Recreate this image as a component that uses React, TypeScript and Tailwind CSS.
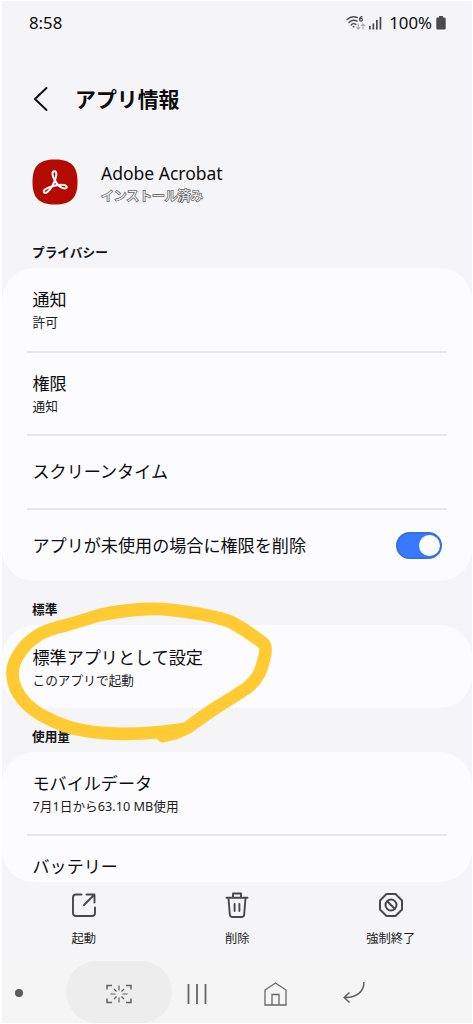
import type { ReactNode } from "react";

interface RowProps {
  title: string;
  sub?: string;
  className: string;
  children?: ReactNode;
}

function Row({ title, sub, className, children }: RowProps) {
  return (
    <div className={`mx-[25px] flex items-center justify-between pl-[5.5px] pr-[5px] ${className}`}>
      <div>
        <div className="text-[17.1px] leading-[24px] whitespace-nowrap">{title}</div>
        {sub && <div className="text-[12.7px] leading-[18px] mt-px mb-px whitespace-nowrap text-[#1c1c1e]">{sub}</div>}
      </div>
      {children}
    </div>
  );
}

function Divider() {
  return <div className="mx-[25px] h-[2px] shrink-0 bg-[#e7e7e9]" />;
}

function SectionTitle({ children, className }: { children: ReactNode; className: string }) {
  return (
    <h2 className={`pl-[30px] text-[12.7px] leading-[18px] font-bold text-[#141416] ${className}`}>
      {children}
    </h2>
  );
}

function StatusBar() {
  return (
    <div className="flex h-[44px] items-center justify-between pl-[27px] pr-[26px] text-[16.8px]">
      <span>8:58</span>
      <div className="flex items-center">
        {/* Wi-Fi 6 with traffic arrows */}
        <svg className="-ml-px" width="20" height="16" viewBox="0 0 20 16" fill="none" stroke="#4d4d4f" strokeWidth="1.4" strokeLinecap="round">
          <path d="M1 4.6C4 1.6 8 1.2 11.2 2.5" />
          <path d="M3 7.4C5.5 5 8.8 4.9 11 6.2" />
          <path d="M5.2 9.9C6.6 8.5 8.6 8.5 9.9 9.4" />
          <circle cx="7.5" cy="11.7" r=".9" fill="#4d4d4f" stroke="none" />
          <path d="M16 1.6C14.3 2 13.5 3.3 13.5 4.5" strokeWidth="1.2" />
          <circle cx="15" cy="4.7" r="1.4" strokeWidth="1.2" />
          <path d="M12.2 9V14M10.5 12.4L12.2 14.2L13.9 12.4M17 14V9M15.3 10.7L17 9L18.7 10.7" stroke="#aaaaad" strokeWidth="1.1" />
        </svg>
        <svg className="ml-[3px]" width="13" height="14" viewBox="0 0 13 14" fill="#4a4a4c">
          <rect x="0" y="10" width="1.7" height="3.5" />
          <rect x="3.5" y="7.5" width="1.7" height="6" />
          <rect x="7" y="4" width="1.7" height="9.5" />
          <rect x="10.6" y="1" width="1.7" height="12.5" />
        </svg>
        <span className="ml-[7px]">100%</span>
        <svg className="ml-[4px]" width="10" height="14" viewBox="0 0 10 14" fill="#4a4a4c">
          <path d="M3 0h4v1.5h1.5q1.2 0 1.2 1.2v9.6q0 1.2-1.2 1.2h-7Q.3 13.5.3 12.3V2.7Q.3 1.5 1.5 1.5H3z" />
        </svg>
      </div>
    </div>
  );
}

function AcrobatIcon() {
  return (
    <svg width="46" height="46" viewBox="0 0 46 46" fill="none">
      <path d="M23 .5C39 .5 45.5 7 45.5 23S39 45.5 23 45.5.5 39 .5 23 7 .5 23 .5z" fill="#b30b00" />
      <path
        d="M22 12.3C25.6 11.5 25 18 20.5 26.5C17 33 12.8 35.5 11.8 32.8C10.8 29.8 22 26 29 25.8C36 25.6 36.3 30 31.5 29.3C25 28.2 17.2 13.5 22 12.3z"
        stroke="#fff"
        strokeWidth="2"
      />
    </svg>
  );
}

function Toggle() {
  return (
    <div className="-mt-px flex h-[27px] w-[46px] items-center justify-end rounded-full border-2 border-[#366fe0] bg-[#387aff]">
      <div className="size-[21px] rounded-full bg-[#fcfcfe]" />
    </div>
  );
}

function BottomAction({ label, children }: { label: string; children: ReactNode }) {
  return (
    <div className="flex w-[153.5px] flex-col items-center">
      {children}
      <span className="mt-[12px] text-[12.3px] leading-[18px] text-[#1c1c1e]">{label}</span>
    </div>
  );
}

function ActionBar() {
  return (
    <div className="flex h-[79px] pl-[5px] pt-[10px]">
      <BottomAction label="起動">
        <svg width="26" height="26" viewBox="0 0 26 26" fill="none" stroke="#48484a" strokeWidth="1.9" strokeLinecap="round" strokeLinejoin="round">
          <path d="M10.5 2.5H5Q2 2.5 2 5.5V21Q2 24 5 24H21Q24 24 24 21V15.5M15.5 2.5H23.5V10.5M23 3L13 13" />
        </svg>
      </BottomAction>
      <BottomAction label="削除">
        <svg width="26" height="26" viewBox="0 0 26 26" fill="none" stroke="#48484a" strokeWidth="1.9" strokeLinecap="round" strokeLinejoin="round">
          <path d="M2.5 5.8H23.5M9 5.5V1.5H17V5.5M4.5 6L5.8 22.5Q6 25 8.5 25H17.5Q20 25 20.2 22.5L21.5 6M10.6 12V19M15.4 12V19" />
        </svg>
      </BottomAction>
      <BottomAction label="強制終了">
        <svg width="26" height="26" viewBox="0 0 26 26" fill="none" stroke="#48484a" strokeWidth="2" strokeLinejoin="round">
          <path d="M8.5 2H17.5L24 8.5V17.5L17.5 24H8.5L2 17.5V8.5Z" />
          <circle cx="13" cy="13" r="5.5" />
          <path d="M9.2 9.2L16.8 16.8" />
        </svg>
      </BottomAction>
    </div>
  );
}

function NavBar() {
  return (
    <div className="flex h-[62px] items-center bg-[#f5f5f5]">
      <div className="ml-[13px] mt-[2px] size-[8px] rounded-full bg-[#5c5c5c]" />
      <div className="ml-[43px] flex h-[62px] w-[106px] items-center justify-center rounded-full bg-[#ededed]">
        <svg className="mt-[3px]" width="26" height="20" viewBox="0 0 26 20" fill="none" stroke="#626262" strokeWidth="1.5">
          <path d="M1 5.5V1.5H6M20 1.5H25V5.5M1 14.5V18.5H6M20 18.5H25V14.5" />
          <path d="M13 1.5V6.5M13 13.5V18.5M4.5 10H9.5M16.5 10H21.5M8 5L10.5 7.5M18 5L15.5 7.5M8 15L10.5 12.5M18 15L15.5 12.5" strokeWidth="1.2" />
        </svg>
      </div>
      <svg className="ml-[15px] mt-[3px]" width="20" height="20" viewBox="0 0 20 20" fill="none" stroke="#666" strokeWidth="1.8">
        <path d="M1.5 0V20M10 0V20M18.5 0V20" />
      </svg>
      <svg className="ml-[57px] mt-[3px]" width="23" height="24" viewBox="0 0 23 24" fill="none" stroke="#686868" strokeWidth="1.3">
        <path d="M1 8L11.5 1L22 8V23H1ZM8 23V12.5H15V23" />
      </svg>
      <svg className="ml-[56px] mt-[2px]" width="22" height="22" viewBox="0 0 22 22" fill="none" stroke="#5f5f5f" strokeWidth="1.5">
        <path d="M21 0C21 10 13 16 1.5 15.5M6.5 10.5L1.2 15.5L6.5 20.5" />
      </svg>
    </div>
  );
}

export default function App() {
  return (
    <div className="relative flex h-[1024px] w-[473px] flex-col overflow-hidden border-y border-r border-l-2 border-white bg-[#f5f5f7] font-['Noto_Sans','Noto_Sans_CJK_JP',sans-serif] text-[#0c0c0e]">
      <StatusBar />

      {/* Page header */}
      <header className="mt-[37px] flex h-[36px] items-center">
        <svg className="-mt-[2px] ml-[31px]" width="16" height="26" viewBox="0 0 16 26" fill="none" stroke="#0c0c0e" strokeWidth="1.9" strokeLinecap="round" strokeLinejoin="round">
          <path d="M13.5 2L2 13L13.5 24" />
        </svg>
        <h1 className="ml-[26px] text-[20.9px] font-bold whitespace-nowrap">アプリ情報</h1>
      </header>

      {/* App name and install state */}
      <div className="mt-[41px] flex h-[48px] items-center">
        <div className="ml-[30px]">
          <AcrobatIcon />
        </div>
        <div className="ml-[23px] mt-px">
          <div className="text-[17.5px] leading-[24px]">Adobe Acrobat</div>
          <div className="text-[12.8px] leading-[18px] mt-px text-[#f5f5f7] [-webkit-text-stroke:1.6px_#666] [paint-order:stroke_fill]">
            インストール済み
          </div>
        </div>
      </div>

      <SectionTitle className="mt-[37px]">プライバシー</SectionTitle>
      <section className="mt-[7px] flex h-[313px] shrink-0 flex-col rounded-[32px] bg-[#fcfcfe]">
        <Row title="通知" sub="許可" className="h-[83px] pt-[1px]" />
        <Divider />
        <Row title="権限" sub="通知" className="h-[81px]" />
        <Divider />
        <Row title="スクリーンタイム" className="h-[72px]" />
        <Divider />
        <Row title="アプリが未使用の場合に権限を削除" className="h-[71px]">
          <Toggle />
        </Row>
      </section>

      <SectionTitle className="mt-[19px]">標準</SectionTitle>
      <section className="mt-[7px] h-[83px] shrink-0 rounded-[32px] bg-[#fcfcfe]">
        <Row title="標準アプリとして設定" sub="このアプリで起動" className="h-[83px] pt-[2px]" />
      </section>

      <SectionTitle className="mt-[19px]">使用量</SectionTitle>
      <section className="mt-[7px] h-[130px] shrink-0 overflow-hidden rounded-[32px] bg-[#fcfcfe]">
        <Row title="モバイルデータ" sub="7月1日から63.10 MB使用" className="h-[82px] pt-[2px]" />
        <Divider />
        <Row title="バッテリー" className="h-[62px]" />
      </section>

      <ActionBar />
      <NavBar />

      {/* Hand-drawn marker around the default app setting */}
      <svg className="pointer-events-none absolute -left-[2px] -top-px" width="473" height="1024" viewBox="0 0 473 1024" fill="none">
        <path
          d="M163 736Q176 734 187 728C197 721 206 714 217 707Q232 698 247 688C259 678 261 671 264 659Q267 648 264 644Q248 631 231 622C221 618 211 616 200 614C183 611 164 608 147 609Q123 610 100 615L67 625Q45 630 37 636C27 642 12 658 12.5 674C13 694 29 709 45 717Q64 727 81 730C113 736 145 735 184 729"
          stroke="#ffca32"
          strokeWidth="12.8"
          strokeLinecap="round"
          strokeLinejoin="round"
        />
      </svg>
    </div>
  );
}
